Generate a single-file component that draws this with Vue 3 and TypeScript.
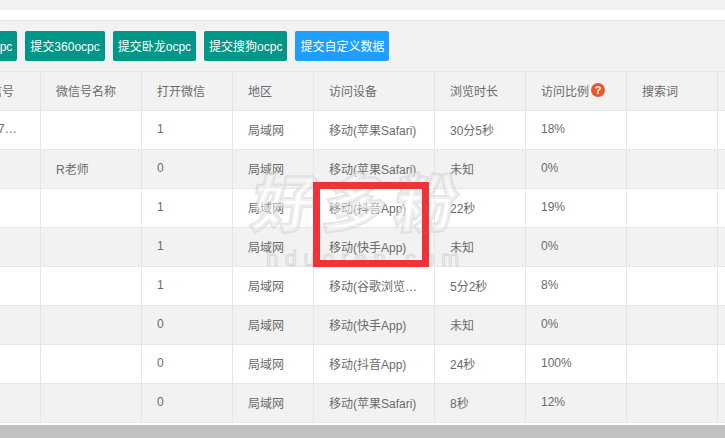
<script setup lang="ts">
const heads = ['微信号', '微信号名称', '打开微信', '地区', '访问设备', '浏览时长', '访问比例', '搜索词', '']
const rows: string[][] = [
  ['8807…', '', '1', '局域网', '移动(苹果Safari)', '30分5秒', '18%', '', ''],
  ['', 'R老师', '0', '局域网', '移动(苹果Safari)', '未知', '0%', '', ''],
  ['', '', '1', '局域网', '移动(抖音App)', '22秒', '19%', '', ''],
  ['', '', '1', '局域网', '移动(快手App)', '未知', '0%', '', ''],
  ['', '', '1', '局域网', '移动(谷歌浏览器)', '5分2秒', '8%', '', ''],
  ['', '', '0', '局域网', '移动(快手App)', '未知', '0%', '', ''],
  ['', '', '0', '局域网', '移动(抖音App)', '24秒', '100%', '', ''],
  ['', '', '0', '局域网', '移动(苹果Safari)', '8秒', '12%', '', ''],
]
const buttons = ['提交百度ocpc', '提交360ocpc', '提交卧龙ocpc', '提交搜狗ocpc']
</script>

<template>
  <div class="page">
    <div class="top"></div>
    <div class="white"></div>
    <div class="toolbar">
      <button v-for="b in buttons" :key="b" class="btn">{{ b }}</button>
      <button class="btn blue">提交自定义数据</button>
    </div>
    <div class="table">
      <div class="row head">
        <div v-for="(h, i) in heads" :key="i" class="cell">
          <span>{{ h }}</span>
          <span v-if="h === '访问比例'" class="help">?</span>
        </div>
      </div>
      <div v-for="(r, ri) in rows" :key="ri" class="row" :class="{ odd: ri % 2 === 1 }">
        <div v-for="(c, ci) in r" :key="ci" class="cell"><span class="txt">{{ c }}</span></div>
      </div>
    </div>
    <div class="scroll"></div>
    <div class="mark" aria-hidden="true">
      <div class="mark-cn">好多粉</div>
      <div class="mark-en">nduoren.com</div>
    </div>
    <div class="redbox"></div>
  </div>
</template>

<style>
html, body { margin: 0; background: #fff; overflow: hidden; }
</style>

<style scoped>
.page {
  position: relative;
  width: 725px;
  height: 438px;
  overflow: hidden;
  background: #fff;
  font-family: "Liberation Sans", "Noto Sans CJK SC", sans-serif;
  font-size: 12px;
  color: #6b6b6b;
}
.top { height: 10px; background: #f2f2f2; }
.white { height: 10px; background: #fff; border-bottom: 1px solid #e6e6e6; }
.toolbar {
  height: 50px;
  background: #f2f2f2;
  display: flex;
  gap: 8px;
  align-items: center;
  margin-left: -66px;
  box-sizing: border-box;
}
.btn {
  height: 30px;
  padding: 0 5px 2px;
  border: 0;
  border-radius: 2px;
  background: #009688;
  color: #fff;
  font: inherit;
  white-space: nowrap;
  flex: none;
}
.blue { background: #1e9fff; }
.table { margin-left: -37px; width: 775px; border-top: 1px solid #e6e6e6; }
.row {
  display: grid;
  grid-template-columns: 78px 101px 91px 81px 121px 91px 101px 91px 70px;
  height: 39px;
  background: #fff;
  border-bottom: 1px solid #e6e6e6;
  box-sizing: border-box;
}
.row.head { height: 39px; background: #f2f2f2; }
.row.odd { background: #f2f2f2; }
.cell {
  box-sizing: border-box;
  padding: 0 15px 2px;
  border-right: 1px solid #e6e6e6;
  display: flex;
  align-items: center;
  white-space: nowrap;
  overflow: hidden;
  min-width: 0;
}
.txt { overflow: hidden; text-overflow: ellipsis; }
.help {
  width: 14px;
  height: 14px;
  margin-left: 2px;
  border-radius: 50%;
  background: #e8582a;
  color: #fff;
  font-size: 11px;
  font-weight: 700;
  line-height: 14px;
  text-align: center;
  flex: none;
}
.scroll { height: 13px; background: #c1c1c1; position: absolute; left: 0; right: 0; bottom: 0; }
.mark {
  position: absolute;
  left: 230px;
  top: 168px;
  width: 260px;
  text-align: center;
  pointer-events: none;
}
.mark-cn {
  font-size: 62px;
  line-height: 74px;
  font-weight: 700;
  color: rgba(255, 255, 255, 0.42);
  -webkit-text-stroke: 4px rgba(205, 205, 205, 0.5);
  paint-order: stroke fill;
  letter-spacing: 9px;
  white-space: nowrap;
  transform: skewX(-8deg);
}
.mark-en {
  font-size: 22px;
  line-height: 24px;
  letter-spacing: 6.5px;
  color: rgba(255, 255, 255, 0.2);
  -webkit-text-stroke: 1px rgba(200, 200, 200, 0.65);
  margin-top: 5px;
  padding-left: 12px;
  white-space: nowrap;
}
.redbox {
  position: absolute;
  left: 313px;
  top: 182px;
  width: 116px;
  height: 85px;
  box-sizing: border-box;
  border: 7px solid #ef3338;
}
</style>
